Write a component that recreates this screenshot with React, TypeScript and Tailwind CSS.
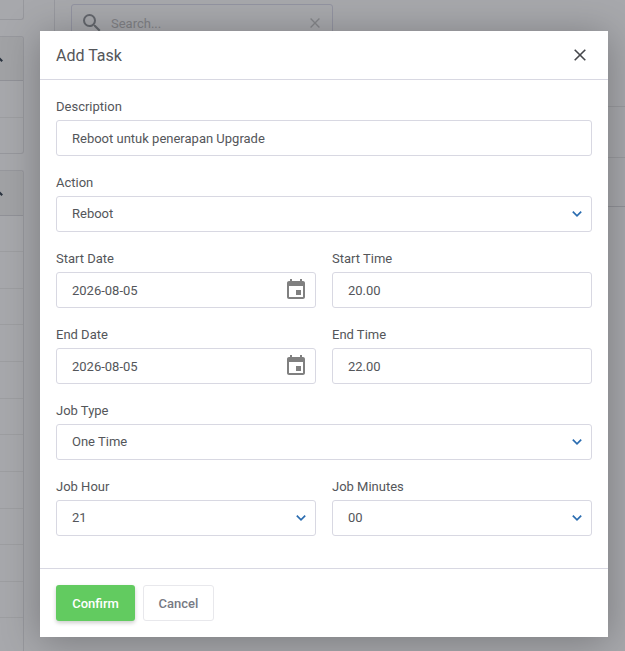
import { useState } from "react";
import type { ReactNode } from "react";

const ROW_HEIGHTS = ["h-9", "h-[37px]", "h-9", "h-[37px]", "h-[37px]", "h-9", "h-[37px]", "h-[37px]", "h-9", "h-[37px]", "h-9", "h-[37px]"];

function CloseIcon({ className }: { className?: string }) {
  return (
    <svg viewBox="0 0 12 12" className={className} fill="none" stroke="currentColor" strokeWidth="1.6">
      <path d="M0.7 0.7 11.3 11.3M11.3 0.7 0.7 11.3" />
    </svg>
  );
}

function SearchIcon() {
  return (
    <svg viewBox="0 0 24 24" className="mt-0.5 h-6 w-6 shrink-0 text-[#64676d]" fill="currentColor">
      <path d="M15.5 14h-.79l-.28-.27A6.47 6.47 0 0 0 16 9.5 6.5 6.5 0 1 0 9.5 16c1.61 0 3.09-.59 4.23-1.57l.27.28v.79l5 4.99L20.49 19l-4.99-5zm-6 0C7.01 14 5 11.99 5 9.5S7.01 5 9.5 5 14 7.01 14 9.5 11.99 14 9.5 14z" />
    </svg>
  );
}

function CalendarIcon() {
  return (
    <svg viewBox="0 0 24 24" className="h-6 w-6 text-[#808080]" fill="currentColor">
      <path d="M17 12h-5v5h5v-5zM16 1v2H8V1H6v2H5c-1.11 0-1.99.9-1.99 2L3 19c0 1.1.89 2 2 2h14c1.1 0 2-.9 2-2V5c0-1.1-.9-2-2-2h-1V1h-2zm3 18H5V8h14v11z" />
    </svg>
  );
}

function ChevronIcon() {
  return (
    <svg viewBox="0 0 10 6" className="h-1.5 w-2.5 text-[#2a6cb0]" fill="none" stroke="currentColor" strokeWidth="1.7">
      <path d="M0.8 0.7 5 4.8 9.2 0.7" />
    </svg>
  );
}

function PanelHead({ className }: { className: string }) {
  return (
    <div className={`overflow-hidden rounded-tr-[3px] border-b border-[#919298] bg-[#a1a2a5] ${className}`}>
      <svg viewBox="0 0 12 7" className="-ml-[9px] mt-[18px] h-[7px] w-3 text-[#2b3440]" fill="none" stroke="currentColor" strokeWidth="2.2">
        <path d="M0.8 6.2 6 1 11.2 6.2" />
      </svg>
    </div>
  );
}

function Backdrop() {
  return (
    <div className="flex h-full bg-[#a7a8ac]">
      <div className="flex w-6 shrink-0 flex-col">
        <div className="h-5 shrink-0 rounded-br-[3px] border-b border-r border-[#97989d]" />
        <div className="mt-4 h-[118px] shrink-0 rounded-r-[3px] border-y border-r border-[#97989d]">
          <PanelHead className="h-11" />
          <div className="h-[37px] border-b border-[#9d9ea1]" />
        </div>
        <div className="mt-4 flex-1 overflow-hidden rounded-tr-[3px] border-r border-t border-[#97989d]">
          <PanelHead className="h-[45px]" />
          {ROW_HEIGHTS.map((h, i) => (
            <div key={i} className={`border-b border-[#9d9ea1] ${h}`} />
          ))}
        </div>
      </div>
      <div className="ml-[30px] flex flex-1 flex-col self-start border-l border-[#97989e]">
        <div className="ml-4 mt-1 flex h-9 w-[262px] items-center rounded-[3px] border border-[#9293a0] pl-2 pr-3">
          <SearchIcon />
          <span className="ml-[7px] flex-1 pt-[3px] text-[#808185]">Search...</span>
          <CloseIcon className="mt-0.5 h-2.5 w-2.5 text-[#85868a]" />
        </div>
        <div className="mt-[66px] h-[101px] border-y border-b-[#919298] border-t-[#999a9e]">
          <div className="h-[51px] border-b border-[#999a9e]" />
        </div>
      </div>
    </div>
  );
}

function Field({ label, icon, children }: { label: string; icon?: ReactNode; children: ReactNode }) {
  return (
    <label className="flex min-w-0 flex-1 flex-col gap-1">
      <span className="h-5 leading-[22px]">{label}</span>
      <span className="flex h-9 items-center rounded-[3px] border border-[#d8d8e2] bg-white pl-[15px]">
        {children}
        {icon}
      </span>
    </label>
  );
}

function TextField({ label, initial, date }: { label: string; initial: string; date?: boolean }) {
  const [value, setValue] = useState(initial);
  return (
    <Field label={label} icon={date && <span className="mr-[7px]"><CalendarIcon /></span>}>
      <input
        value={value}
        onChange={(e) => setValue(e.target.value)}
        className="min-w-0 flex-1 bg-transparent pt-0.5 outline-none"
      />
    </Field>
  );
}

function SelectField({ label, value }: { label: string; value: string }) {
  return (
    <Field label={label} icon={<span className="mr-[9px]"><ChevronIcon /></span>}>
      <span className="flex-1 pb-px">{value}</span>
    </Field>
  );
}

export default function App() {
  return (
    <div className="relative h-screen overflow-hidden font-[Roboto,sans-serif] text-[13px] text-[#54565a]">
      <Backdrop />
      <div
        role="dialog"
        aria-modal="true"
        className="absolute left-10 top-[31px] flex h-[606px] w-[568px] flex-col bg-white shadow-[0_4px_36px_rgba(0,0,0,0.28)]"
      >
        <header className="flex h-[49px] shrink-0 items-center justify-between border-b border-[#d8d8e2] pl-4 pr-[22px]">
          <h2 className="pt-0.5 text-base">Add Task</h2>
          <button type="button" title="Close">
            <CloseIcon className="h-3 w-3 text-[#45474b]" />
          </button>
        </header>
        <div className="flex flex-1 flex-col gap-4 p-4">
          <div className="flex">
            <TextField label="Description" initial="Reboot untuk penerapan Upgrade" />
          </div>
          <div className="flex">
            <SelectField label="Action" value="Reboot" />
          </div>
          <div className="flex gap-4">
            <TextField label="Start Date" initial="2026-08-05" date />
            <TextField label="Start Time" initial="20.00" />
          </div>
          <div className="flex gap-4">
            <TextField label="End Date" initial="2026-08-05" date />
            <TextField label="End Time" initial="22.00" />
          </div>
          <div className="flex">
            <SelectField label="Job Type" value="One Time" />
          </div>
          <div className="flex gap-4">
            <SelectField label="Job Hour" value="21" />
            <SelectField label="Job Minutes" value="00" />
          </div>
        </div>
        <footer className="flex shrink-0 gap-2 border-t border-[#d8d8e2] p-4 font-medium">
          <button type="button" className="h-9 w-[79px] rounded-[3px] bg-[#62cb60] pt-0.5 text-white shadow-[0_2px_4px_rgba(0,0,0,0.2)]">
            Confirm
          </button>
          <button type="button" className="h-9 w-[71px] rounded-[3px] border border-[#e8e8ec] bg-white pt-0.5 text-[#777a84]">
            Cancel
          </button>
        </footer>
      </div>
    </div>
  );
}
